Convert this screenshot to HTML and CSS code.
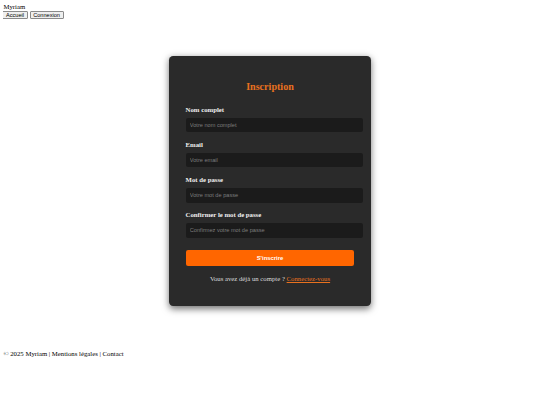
FILE: index.html
```html
<!DOCTYPE html>
<html lang="fr">
<head>
<meta charset="utf-8">
<title>Inscription - Myriam</title>
<link rel="stylesheet" href="styles.css">
</head>
<body>
<header class="site-header">
  <div class="brand">Myriam</div>
  <nav class="nav">
    <button class="nav-btn">Accueil</button>
    <button class="nav-btn">Connexion</button>
  </nav>
</header>
<main class="main">
  <section class="card">
    <h2 class="card-title">Inscription</h2>
    <form class="form">
      <div class="field">
        <label class="label">Nom complet</label>
        <input class="input" type="text" placeholder="Votre nom complet">
      </div>
      <div class="field">
        <label class="label">Email</label>
        <input class="input" type="email" placeholder="Votre email">
      </div>
      <div class="field">
        <label class="label">Mot de passe</label>
        <input class="input" type="password" placeholder="Votre mot de passe">
      </div>
      <div class="field">
        <label class="label">Confirmer le mot de passe</label>
        <input class="input" type="password" placeholder="Confirmez votre mot de passe">
      </div>
      <button class="submit" type="button">S'inscrire</button>
    </form>
    <p class="switch">Vous avez déjà un compte ? <a class="switch-link" href="#">Connectez-vous</a></p>
  </section>
</main>
<footer class="footer">© 2025 Myriam | Mentions légales | Contact</footer>
</body>
</html>
```

FILE: styles.css
```css
html, body {
  background: #ffffff;
}
body {
  margin: 3.4px;
  font-family: "Liberation Serif", "Times New Roman", serif;
  font-size: 6.75px;
  line-height: normal;
  color: #000;
}
.brand {
  line-height: 7.8px;
}
.nav {
  display: flex;
  gap: 2px;
  margin-left: -1px;
}
.nav-btn {
  box-sizing: border-box;
  height: 8px;
  font-family: "Liberation Sans", Arial, sans-serif;
  font-size: 5.6px;
  line-height: 6px;
  padding: 0 2.6px;
  border: 1px solid #8a8a8a;
  border-radius: 1px;
  background: #efefef;
  color: #000;
}
.main {
  min-height: 324px;
  display: flex;
  align-items: center;
  justify-content: center;
}
.card {
  width: 168.8px;
  padding: 16.9px;
  background: #2a2a2a;
  border-radius: 4.2px;
  box-shadow: 0 2.5px 7px rgba(0, 0, 0, 0.55);
  color: #e6e6e6;
}
.card-title {
  margin: 8.4px 0 12.66px;
  font-size: 10.1px;
  line-height: 11.6px;
  text-align: center;
  color: #e8711f;
  font-weight: bold;
}
.form {
  display: flex;
  flex-direction: column;
}
.field {
  display: flex;
  flex-direction: column;
  margin-bottom: 8.44px;
}
.label {
  font-weight: bold;
  line-height: 7.76px;
  margin-bottom: 4.2px;
  color: #f0f0f0;
}
.input {
  box-sizing: border-box;
  width: 177.2px;
  height: 14.77px;
  padding: 0 4.2px;
  border: none;
  border-radius: 2.1px;
  background: #1b1b1b;
  color: #ddd;
  font-family: "Liberation Sans", Arial, sans-serif;
  font-size: 5.62px;
  outline: none;
}
.input::placeholder {
  color: #7d7d7d;
}
.submit {
  margin-top: 4.2px;
  height: 16px;
  width: 168.8px;
  border: none;
  border-radius: 2.1px;
  background: #ff6600;
  color: #fff;
  font-family: "Liberation Sans", Arial, sans-serif;
  font-weight: bold;
  font-size: 5.9px;
}
.switch {
  margin: 8.5px 0 6.75px;
  text-align: center;
  line-height: 7.76px;
  color: #dcdcdc;
}
.switch-link {
  color: #e8711f;
  text-decoration: underline;
}
.footer {
  margin-top: 6.75px;
  line-height: 7.76px;
}
```
